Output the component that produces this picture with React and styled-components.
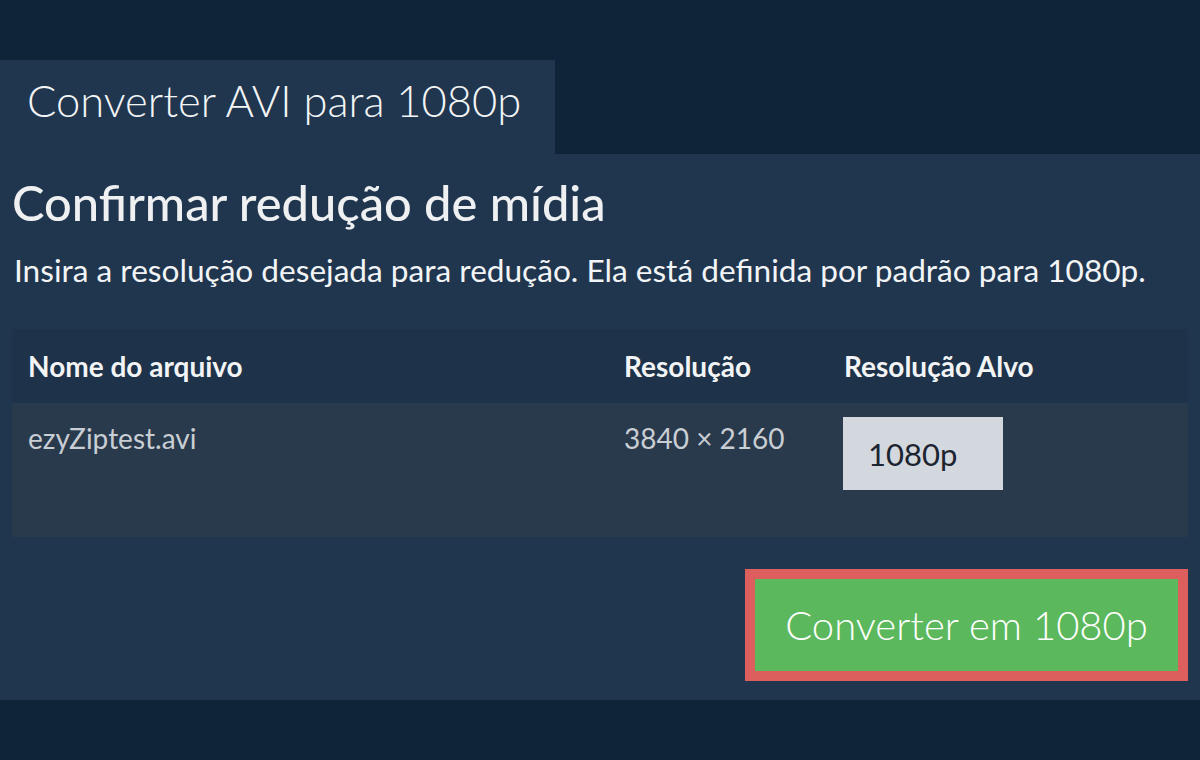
import React from 'react'
import styled, { createGlobalStyle } from 'styled-components'

const GlobalStyle = createGlobalStyle`
  html, body {
    margin: 0;
    padding: 0;
    background-color: #0f2339;
    font-family: Lato, "Open Sans", sans-serif;
  }
`

const Page = styled.div`
  width: 1200px;
  height: 760px;
  padding-top: 60px;
  box-sizing: border-box;
  background-color: #0f2339;
`
const Tab = styled.div`
  width: 555px;
  height: 94px;
  box-sizing: border-box;
  padding: 14px 0 0 27px;
  background-color: #20364e;
  color: #f2f4f6;
  font-size: 43.5px;
  font-weight: 300;
  line-height: 1.2;
`
const Panel = styled.div`
  height: 546px;
  box-sizing: border-box;
  padding: 12px 12px 0;
  background-color: #20364e;
  display: flex;
  flex-direction: column;
`
const Heading = styled.h1`
  margin: 7px 0 0;
  color: #eef0f2;
  font-size: 48.8px;
  font-weight: 500;
  line-height: 1.2;
`
const Lead = styled.p`
  margin: 20px 0 0 2px;
  color: #f2f4f6;
  font-size: 31.6px;
  line-height: 1.2;
`
const Table = styled.table`
  margin-top: 40px;
  width: 100%;
  border-collapse: collapse;
  table-layout: fixed;
`
const HeadCell = styled.th`
  height: 74px;
  box-sizing: border-box;
  padding: 0 16px;
  text-align: left;
  vertical-align: middle;
  background-color: #1e3349;
  color: #f2f4f6;
  font-size: 28px;
  font-weight: 700;
  line-height: 1.2;
  width: ${p => p.$w || 'auto'};
`
const Cell = styled.td`
  height: 134px;
  padding: 19px 16px 0;
  box-sizing: border-box;
  vertical-align: top;
  background-color: #2a3a4d;
  color: #c9ced4;
  font-size: 28px;
  line-height: 1.2;
`
const TargetInput = styled.input`
  margin: -5px 0 0 -1px;
  width: 160px;
  height: 73px;
  box-sizing: border-box;
  border: none;
  padding: 0 0 0 25px;
  background-color: #d3d8de;
  color: #1c2430;
  font-family: Lato, sans-serif;
  font-size: 31px;
  outline: none;
  display: block;
`
const Actions = styled.div`
  margin-top: 32px;
  display: flex;
  justify-content: flex-end;
`
const ConvertButton = styled.button`
  width: 443px;
  height: 112px;
  border: 10px solid #dc5f5e;
  background-color: #5cb85c;
  color: #ffffff;
  font-family: Lato, sans-serif;
  font-size: 40px;
  font-weight: 300;
  cursor: pointer;
`

export default function App() {
  return (
    <>
      <GlobalStyle />
      <Page>
        <Tab>Converter AVI para 1080p</Tab>
        <Panel>
          <Heading>Confirmar redução de mídia</Heading>
          <Lead>Insira a resolução desejada para redução. Ela está definida por padrão para 1080p.</Lead>
          <Table>
            <thead>
              <tr>
                <HeadCell $w="596px">Nome do arquivo</HeadCell>
                <HeadCell $w="220px">Resolução</HeadCell>
                <HeadCell>Resolução Alvo</HeadCell>
              </tr>
            </thead>
            <tbody>
              <tr>
                <Cell>ezyZiptest.avi</Cell>
                <Cell>3840 × 2160</Cell>
                <Cell><TargetInput defaultValue="1080p" /></Cell>
              </tr>
            </tbody>
          </Table>
          <Actions>
            <ConvertButton>Converter em 1080p</ConvertButton>
          </Actions>
        </Panel>
      </Page>
    </>
  )
}
